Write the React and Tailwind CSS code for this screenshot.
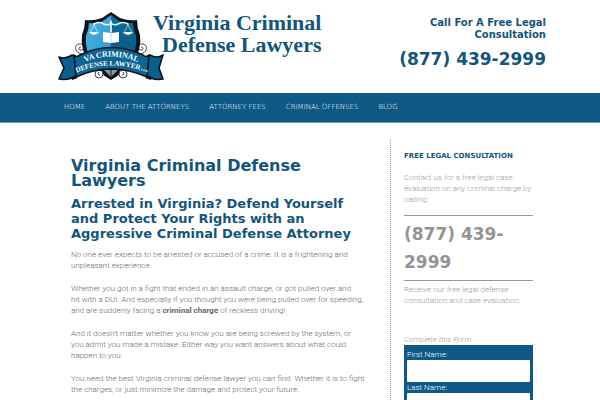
import React from 'react';

const NAV_LINKS = ['Home', 'About The Attorneys', 'Attorney Fees', 'Criminal Offenses', 'Blog'];

const FORM_FIELDS = [
  { id: 'firstName', label: 'First Name:' },
  { id: 'lastName', label: 'Last Name:' },
  { id: 'email', label: 'Email:' }
];

function Crest() {
  return (
    <svg viewBox="0 0 107 70" className="h-[70px] w-[107px] shrink-0" role="img" aria-label="VA Criminal Defense Lawyer">
      <defs>
        <linearGradient id="shieldLeft" x1="0" y1="0" x2="1" y2="1">
          <stop offset="0" stopColor="#4fb4e6" />
          <stop offset="1" stopColor="#2b96cc" />
        </linearGradient>
        <linearGradient id="shieldRight" x1="0" y1="0" x2="0" y2="1">
          <stop offset="0" stopColor="#0f6f9f" />
          <stop offset="1" stopColor="#0a5580" />
        </linearGradient>
        <path id="arcTop" d="M25 51 Q53 38 82 51" />
        <path id="arcBottom" d="M15 62 Q53 45 93 62" />
      </defs>
      {/* scrolls beside the shield */}
      <g fill="none" stroke="#3a4248" strokeWidth="1">
        <path d="M25 42 C17 42 15 33 21 32 C27 31 27 39 22 38 C20 37 21 35 23 35" />
        <path d="M81 42 C89 42 91 33 85 32 C79 31 79 39 84 38 C86 37 85 35 83 35" />
      </g>
      <path d="M53 0 L62 6 Q70 9 79 8 Q79 16 82 23 Q83 30 81 38 Q75 55 53 68 Q31 55 25 38 Q23 30 24 23 Q27 16 27 8 Q36 9 44 6 Z" fill="#0b141c" />
      <path d="M53 3 L45 9 Q38 12 31 11 Q31 17 28 24 Q27 31 29 38 L33 46 H53 Z" fill="url(#shieldLeft)" />
      <path d="M53 3 L61 9 Q68 12 75 11 Q75 17 78 24 Q79 31 77 38 L73 46 H53 Z" fill="url(#shieldRight)" />
      {/* scales and book */}
      <g fill="none" stroke="#f4fbff" strokeLinecap="round">
        <path d="M36 12 Q41 9 46 12 Q50 14 53 11 Q56 14 60 12 Q65 9 70 12 M53 9 V20" strokeWidth="1.6" />
        <path d="M36 13 L32 21 M36 13 L40 21 M70 13 L66 21 M70 13 L74 21" strokeWidth="0.6" />
      </g>
      <path d="M31 20 H41 Q36 26 31 20 Z M65 20 H75 Q70 26 65 20 Z" fill="#fff" />
      <path d="M45 20 L53 21 L61 20 V30 L53 31 L45 30 Z" fill="#fff" />
      <path d="M53 21 V31" stroke="#9fc9de" strokeWidth="0.7" />
      {/* lower point with its curls */}
      <path d="M38 55 H68 Q64 62 53 67 Q42 62 38 55 Z" fill="#0b141c" />
      <path d="M46 58 L53 65 L60 58 Z" fill="#8a979f" />
      <path d="M53 57 V65" stroke="#0b141c" strokeWidth="1" />
      <g fill="#fff" stroke="#3a4248" strokeWidth="1">
        <circle cx="41" cy="62" r="4" />
        <circle cx="65" cy="62" r="4" />
        <path d="M41 60 Q39 63 42 63 M65 60 Q67 63 64 63" fill="none" />
      </g>
      {/* ribbon */}
      <g stroke="#0b141c" strokeWidth="1.6" strokeLinejoin="round">
        <path d="M1 45 Q7 48 14 43 L21 46 V62 Q11 69 1 67 L6 56 Z" fill="#0b5f8e" />
        <path d="M105 43 Q99 47 92 43 L86 46 V62 Q95 69 105 67 L101 56 Z" fill="#0b5f8e" />
        <path d="M16 43 Q18 46 22 43 Q53 28 85 43 Q88 46 91 43 L89 65 Q53 49 18 65 Z" fill="#0d6596" />
      </g>
      <path d="M18 65 Q12 63 14 68 L20 66 Z M89 65 Q95 63 93 68 L87 66 Z" fill="#0b141c" />
      <g fill="#fff" fontFamily="'Liberation Serif', serif" fontWeight="700" textAnchor="middle">
        <text fontSize="8"><textPath href="#arcTop" startOffset="50%">VA CRIMINAL</textPath></text>
        <text fontSize="7"><textPath href="#arcBottom" startOffset="50%">DEFENSE LAWYER<tspan fontSize="3">.COM</tspan></textPath></text>
      </g>
    </svg>
  );
}

function Header() {
  return (
    <header className="mx-auto flex w-full max-w-[492px] items-start justify-between pt-3 pb-[11px] pl-1 text-[#14557b]">
      <a href="#home" className="flex items-start">
        <Crest />
        <span className="-ml-3 text-right font-['Liberation_Serif',serif] text-[22px] leading-[22px] font-bold whitespace-nowrap">
          Virginia Criminal<br />Defense Lawyers
        </span>
      </a>
      <div className="w-[152px] pt-[5px] text-right font-bold">
        <p className="pl-5 text-[10px] leading-[12px]">Call For A Free Legal Consultation</p>
        <p className="pt-2 text-[17px] leading-[20px] whitespace-nowrap">(877) 439-2999</p>
      </div>
    </header>
  );
}

function NavBar() {
  return (
    <nav className="border-b border-[#6d9cb8] bg-[#0f5a85]">
      <ul className="mx-auto flex w-full max-w-[492px] gap-5 px-[10px] text-[7px] leading-[29px] font-extralight text-white uppercase">
        {NAV_LINKS.map(label => (
          <li key={label}><a href="#nav">{label}</a></li>
        ))}
      </ul>
    </nav>
  );
}

function Article() {
  return (
    <main className="min-w-0 flex-1 pt-[19px] pr-5 pl-[17px] font-['Roboto',sans-serif] text-[8px] leading-[11px] font-light text-[#666]">
      <h1 className="font-['DejaVu_Sans',sans-serif] text-[16px] leading-[15px] font-bold text-[#14557b]">Virginia Criminal Defense Lawyers</h1>
      <h2 className="pt-2 pb-2 font-['DejaVu_Sans',sans-serif] text-[13px] leading-[15px] font-bold text-[#14557b]">
        Arrested in Virginia? Defend Yourself and Protect Your Rights with an Aggressive Criminal Defense Attorney
      </h2>
      <div className="flex flex-col gap-3">
        <p>No one ever expects to be arrested or accused of a crime. It is a frightening and<br />unpleasant experience.</p>
        <p>
          Whether you got in a fight that ended in an assault charge, or got pulled over and<br />
          hit with a DUI. And especially if you thought you were being pulled over for speeding,<br />
          and are suddenly facing a <strong className="font-bold">criminal charge</strong> of reckless driving!
        </p>
        <p>
          And it doesn't matter whether you know you are being screwed by the system, or<br />
          you admit you made a mistake. Either way you want answers about what could<br />
          happen to you.
        </p>
        <p>
          You need the best Virginia criminal defense lawyer you can find. Whether it is to fight<br />
          the charges, or just minimize the damage and protect your future.
        </p>
      </div>
    </main>
  );
}

function Sidebar() {
  return (
    <aside className="w-[156px] shrink-0 border-l border-dotted border-[#999] pr-[13px] pl-[13px] font-['Roboto',sans-serif] text-[8px] leading-[11px] font-light text-[#999]">
      <h3 className="pt-3 pb-[10px] font-['DejaVu_Sans',sans-serif] text-[7px] font-bold text-[#14557b] uppercase">Free Legal Consultation</h3>
      <p>Contact us for a free legal case evaluation on any criminal charge by calling:</p>
      <p className="mt-[10px] mb-[3px] border-y border-[#999] py-1 font-['DejaVu_Sans',sans-serif] text-[17px] leading-[28px] font-bold text-[#949494]">(877) 439-2999</p>
      <p>Receive our free legal defense consultation and case evaluation.</p>
      <form>
        <p className="pt-7 italic">Complete this Form</p>
        <div className="bg-[#0f5a85] px-[3px] pt-1 pb-2 text-white">
          {FORM_FIELDS.map(field => (
            <div key={field.id}>
              <label htmlFor={field.id} className="block">{field.label}</label>
              <input id={field.id} type="text" className="block h-[22px] w-full rounded-[1px] bg-white px-1 text-[#333]" />
            </div>
          ))}
        </div>
      </form>
    </aside>
  );
}

export default function App() {
  return (
    <div className="h-screen overflow-hidden bg-white font-['DejaVu_Sans',sans-serif]">
      <Header />
      <NavBar />
      <div className="mx-auto flex w-full max-w-[492px] pt-4">
        <Article />
        <Sidebar />
      </div>
    </div>
  );
}
